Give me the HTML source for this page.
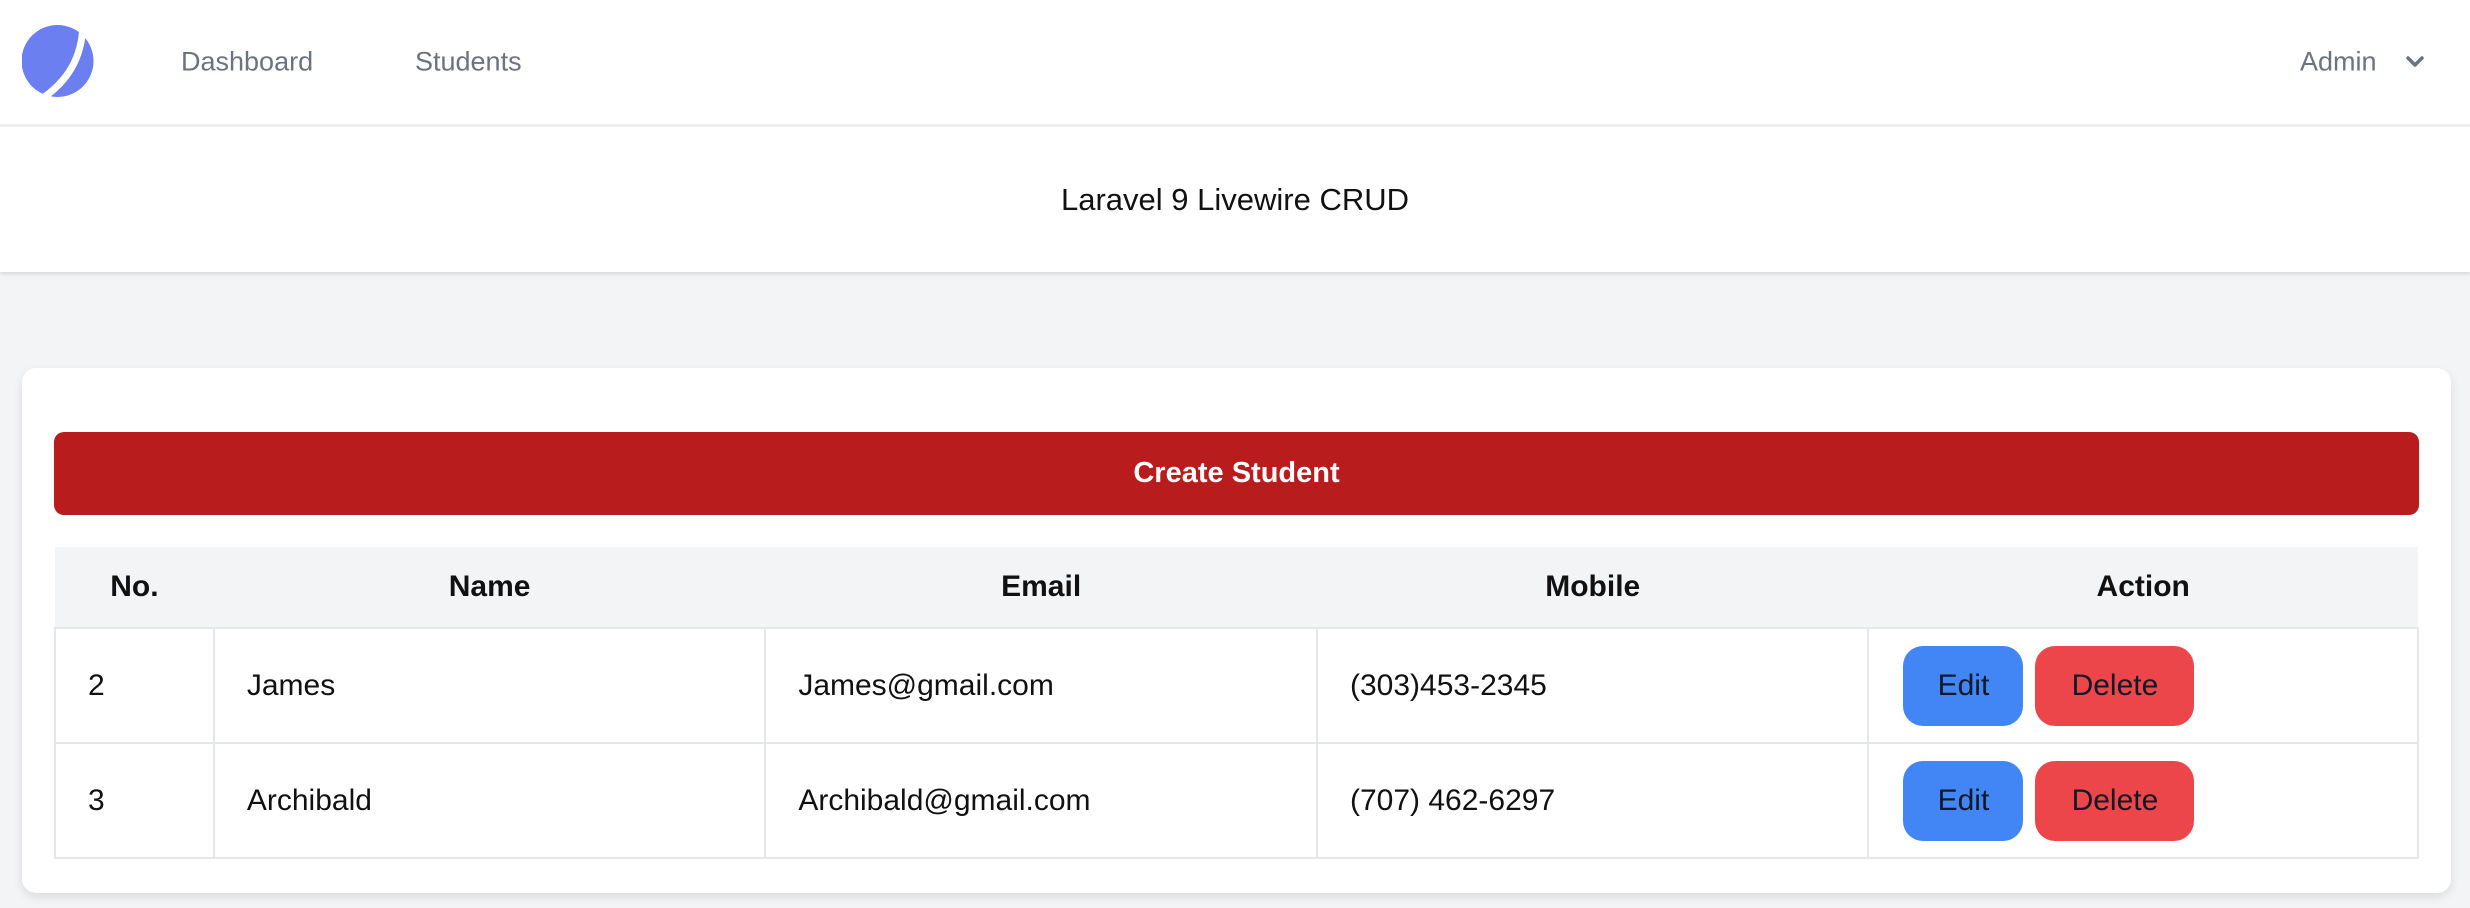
<!DOCTYPE html>
<html><head><meta charset="utf-8">
<style>
*{box-sizing:border-box;margin:0;padding:0}
html,body{width:2470px;height:908px;overflow:hidden}
body{background:#f3f4f6;font-family:"Liberation Sans",sans-serif;color:#111;position:relative}
.nav{position:absolute;left:0;top:0;width:2470px;height:126px;background:#fff;border-bottom:2px solid #eeeff1}
.nav .l{position:absolute;top:62px;transform:translateY(-50%);font-size:27px;color:#6b7280}
.hdr{position:absolute;left:0;top:127px;width:2470px;height:145px;background:#fff;box-shadow:0 2px 4px rgba(0,0,0,.12)}
.hdr div{position:absolute;left:0;right:0;top:50%;transform:translateY(-50%);text-align:center;font-size:31px;color:#111}
.card{position:absolute;left:22px;top:368px;width:2429px;height:525px;background:#fff;border-radius:14px;box-shadow:0 4px 10px rgba(0,0,0,.1)}
.create{position:absolute;left:54px;top:432px;width:2365px;height:83px;background:#b91c1c;border-radius:10px;color:#fff;font-weight:bold;font-size:29px;display:flex;align-items:center;justify-content:center}
table{position:absolute;left:54px;top:547px;width:2365px;border-collapse:collapse;font-size:30px}
th{background:#f3f4f6;height:81px;font-weight:bold;text-align:center}
td{border:2px solid #e5e7eb;padding:0 32px;height:115px}
.b{display:inline-block;height:80px;line-height:80px;border-radius:20px;color:#111827;text-align:center;font-size:30px;vertical-align:middle}
.e{background:#4285f4;width:120px;margin-left:2px}
.d{background:#ec464a;width:159px;margin-left:12px}
</style></head><body>
<div class="nav">
<svg style="position:absolute;left:22px;top:24px" width="72" height="74" viewBox="0 0 72 74">
<circle cx="35.5" cy="37" r="36" fill="#6b7ff0"/>
<path d="M61 0 C60 35 45 58 18 76" stroke="#fff" stroke-width="7" fill="none"/>
</svg>
<div class="l" style="left:181px">Dashboard</div>
<div class="l" style="left:415px">Students</div>
<div class="l" style="left:2300px">Admin</div>
<svg style="position:absolute;left:2405px;top:55px" width="20" height="14" viewBox="0 0 20 14"><path d="M3 3 L10 10 L17 3" stroke="#6b7280" stroke-width="3.5" fill="none" stroke-linecap="round" stroke-linejoin="round"/></svg>
</div>
<div class="hdr"><div>Laravel 9 Livewire CRUD</div></div>
<div class="card"></div>
<div class="create">Create Student</div>
<table>
<colgroup><col style="width:159px"><col style="width:552px"><col style="width:552px"><col style="width:552px"><col style="width:550px"></colgroup>
<tr><th>No.</th><th>Name</th><th>Email</th><th>Mobile</th><th>Action</th></tr>
<tr><td>2</td><td>James</td><td>James@gmail.com</td><td>(303)453-2345</td><td><span class="b e">Edit</span><span class="b d">Delete</span></td></tr>
<tr><td>3</td><td>Archibald</td><td>Archibald@gmail.com</td><td>(707) 462-6297</td><td><span class="b e">Edit</span><span class="b d">Delete</span></td></tr>
</table>
</body></html>
